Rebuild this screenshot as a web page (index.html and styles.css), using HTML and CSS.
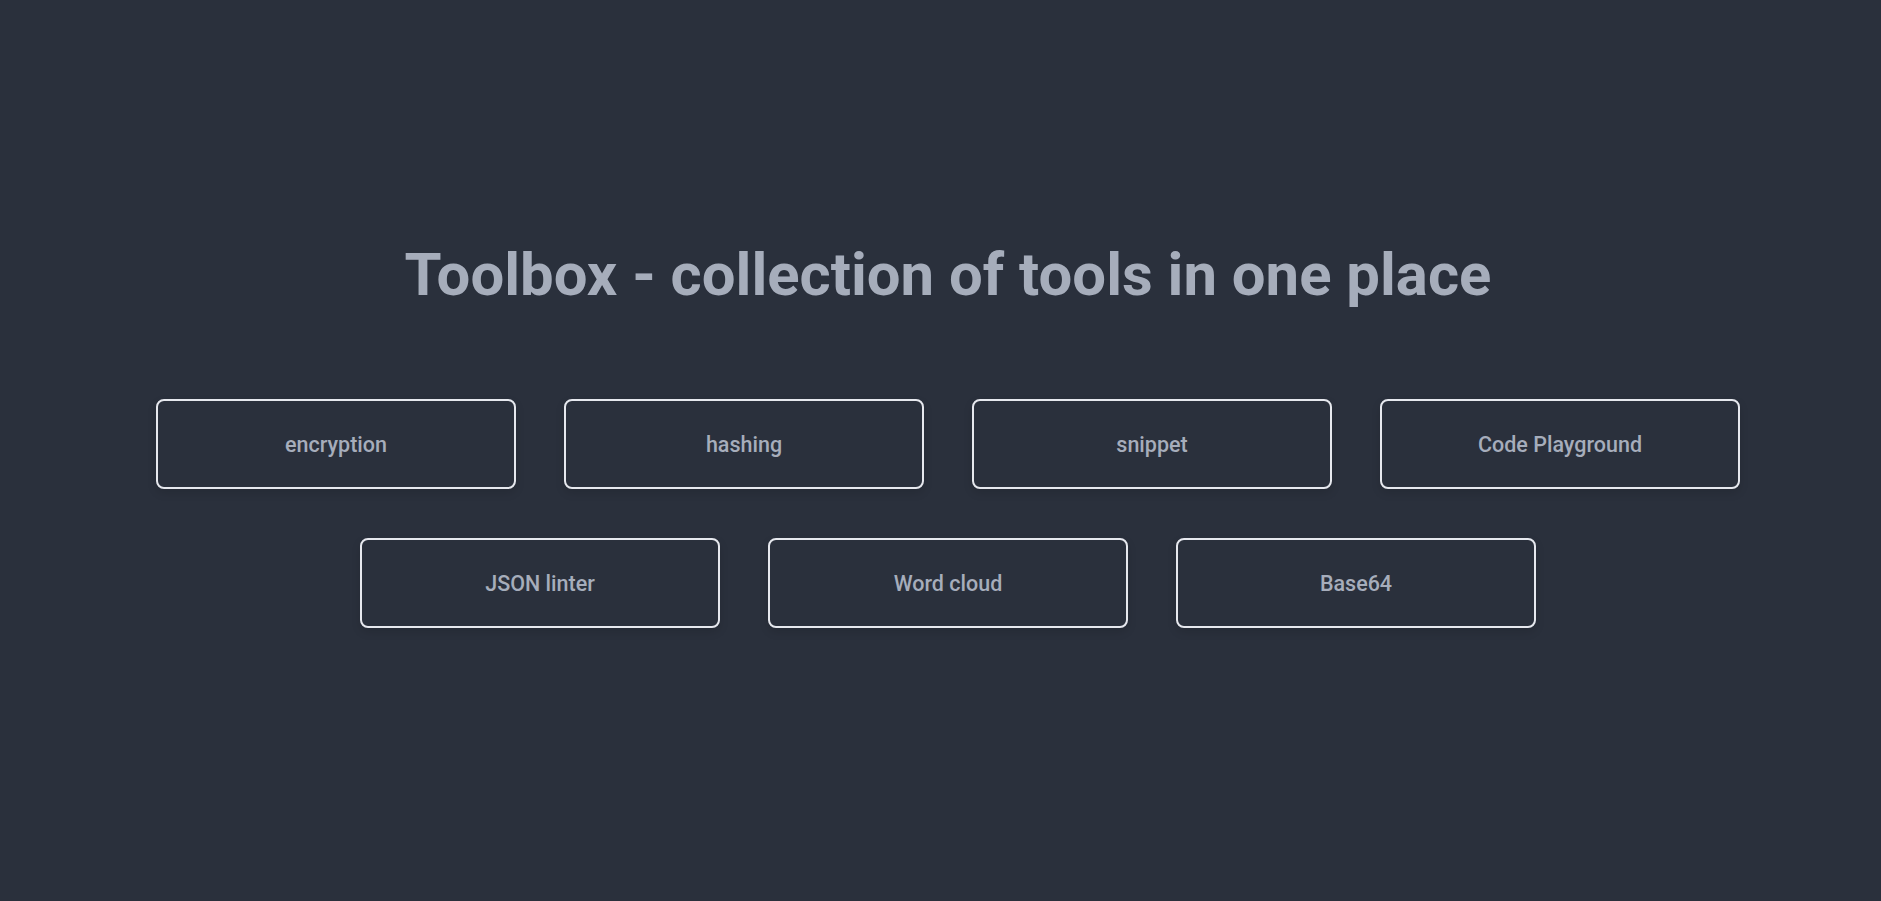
FILE: index.html
```html
<!DOCTYPE html>
<html lang="en">
<head>
<meta charset="utf-8">
<title>Toolbox</title>
<link rel="stylesheet" href="styles.css">
</head>
<body>
<main class="page">
  <h1 class="title">Toolbox - collection of tools in one place</h1>
  <nav class="tools">
    <a class="tool" href="#">encryption</a>
    <a class="tool" href="#">hashing</a>
    <a class="tool" href="#">snippet</a>
    <a class="tool" href="#">Code Playground</a>
    <a class="tool" href="#">JSON linter</a>
    <a class="tool" href="#">Word cloud</a>
    <a class="tool" href="#">Base64</a>
  </nav>
</main>
</body>
</html>
```
FILE: styles.css
```css
html, body {
  margin: 0;
  padding: 0;
  height: 100%;
  background: #2a303c;
}
body {
  font-family: Roboto, "Liberation Sans", sans-serif;
  color: #a6adbb;
}
.page {
  display: flex;
  flex-direction: column;
  align-items: center;
  padding: 240px 0 0 15px;
  box-sizing: border-box;
  min-height: 100%;
}
.title {
  margin: 0;
  font-size: 59.85px;
  font-weight: 700;
  line-height: 70px;
  color: #a6adbb;
  text-align: center;
}
.tools {
  margin-top: 89px;
  width: 1584px;
  display: flex;
  flex-wrap: wrap;
  justify-content: center;
  column-gap: 48px;
  row-gap: 49px;
}
.tool {
  width: 360px;
  height: 90px;
  box-sizing: border-box;
  padding-top: 1px;
  border: 2px solid #e6e8ee;
  border-radius: 8px;
  display: flex;
  align-items: center;
  justify-content: center;
  font-size: 21.5px;
  font-weight: 500;
  color: #a6adbb;
  text-decoration: none;
  box-shadow: 0 4px 10px rgba(0, 0, 0, 0.12);
}
```
